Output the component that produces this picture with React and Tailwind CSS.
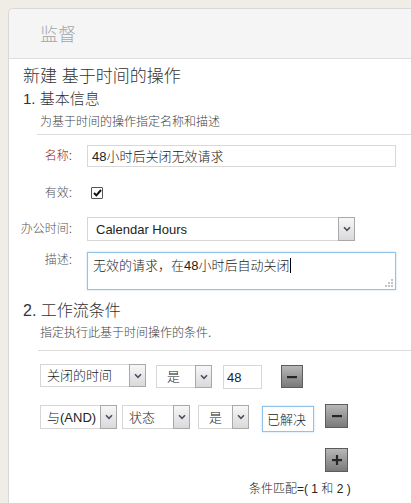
import React from 'react';

const font = "font-['Liberation_Sans','Noto_Sans_CJK_SC',sans-serif]";

function Chevron() {
  return (
    <svg width="8" height="6" viewBox="0 0 8 6">
      <path d="M1 1.2 L4 4.4 L7 1.2" fill="none" stroke="#4a5060" strokeWidth="1.6" />
    </svg>
  );
}

function Select({ children, className }) {
  return (
    <div className={`flex items-stretch bg-white border border-[#d6d6d6] ${className}`}>
      <div className="flex-1 flex items-center pl-[6px] text-[13px] text-[#222] leading-none whitespace-nowrap overflow-hidden">
        {children}
      </div>
      <div className="w-[17px] -my-px -mr-px flex items-center justify-center border border-[#a9a9a9] bg-linear-to-b from-[#f7f7f7] to-[#d9d9d9]">
        <Chevron />
      </div>
    </div>
  );
}

function SquareButton({ plus, className }) {
  return (
    <div
      className={`flex items-center justify-center border border-[#5c5c5c] bg-linear-to-b from-[#b8b8b8] to-[#7a7a7a] ${className}`}
    >
      <svg width="12" height="12" viewBox="0 0 12 12">
        <rect x="1" y="5" width="10" height="2.2" fill="#262626" />
        {plus && <rect x="4.9" y="1" width="2.2" height="10" fill="#262626" />}
      </svg>
    </div>
  );
}

function FormRow({ label, red, className, children }) {
  return (
    <div className={`flex ${className}`}>
      <div className={`w-[63px] text-right text-[12px] leading-[16px] ${red ? 'text-[#8e1b1b]' : 'text-[#555]'}`}>
        {label}
      </div>
      <div className="ml-[15px]">{children}</div>
    </div>
  );
}

export default function App() {
  return (
    <div className={`w-[411px] h-[503px] overflow-hidden bg-[#f0ece6] pt-[8px] pl-[8px] font-light ${font}`}>
      <div className="h-full bg-white border-l border-t border-[#d8d8d8] rounded-tl-[5px]">
        <div className="h-[50px] bg-[#f5f5f5] border-b border-[#dedede] rounded-tl-[5px] flex items-center pl-[31px] pt-[3px]">
          <span className="text-[18px] leading-none text-[#a2a6ab]">监督</span>
        </div>

        <div className="mt-[8px] pl-[14px] text-[17px] leading-[20px] text-[#333]">新建 基于时间的操作</div>
        <div className="mt-[2px] pl-[14px] text-[15px] leading-[20px] text-[#333]">1. 基本信息</div>
        <div className="mt-[5px] pl-[31px] text-[12px] leading-[16px] text-[#444]">为基于时间的操作指定名称和描述</div>
        <div className="mt-[4px] ml-[28px] border-t border-[#dcdcdc]" />

        <FormRow label="名称:" red className="mt-[10px] h-[22px] items-center">
          <div className="w-[309px] h-[22px] border border-[#d8d8d8] flex items-center pl-[4px] text-[13px] text-[#222] leading-none">
            48小时后关闭无效请求
          </div>
        </FormRow>

        <FormRow label="有效:" className="mt-[16px] h-[20px] items-center">
          <div className="ml-[4px] w-[12px] h-[12px] border border-[#555] rounded-[1px] flex items-center justify-center bg-white">
            <svg width="9" height="8" viewBox="0 0 9 8">
              <path d="M1 4 L3.4 6.4 L8 1" fill="none" stroke="#111" strokeWidth="2" />
            </svg>
          </div>
        </FormRow>

        <FormRow label="办公时间:" className="mt-[14px] h-[24px] items-center">
          <Select className="w-[268px] h-[24px]">
            <span className="pl-[2px] text-[13px] text-[#222]">Calendar Hours</span>
          </Select>
        </FormRow>

        <FormRow label="描述:" className="mt-[11px] items-start">
          <div className="relative w-[309px] h-[38px] border border-[#8fc3ec] shadow-[0_0_2px_rgba(120,180,230,0.5)] pl-[5px] pt-[5px] text-[13px] leading-[16px] text-[#222] flex items-start">
            <span>无效的请求，在48小时后自动关闭</span>
            <span className="inline-block w-px h-[15px] bg-black ml-[1px]" />
            <svg className="absolute right-[2px] bottom-[2px]" width="8" height="8" viewBox="0 0 8 8">
              <rect x="6" y="0" width="2" height="2" fill="#c4c4c4" />
              <rect x="3" y="3" width="2" height="2" fill="#c4c4c4" />
              <rect x="6" y="3" width="2" height="2" fill="#c4c4c4" />
              <rect x="0" y="6" width="2" height="2" fill="#c4c4c4" />
              <rect x="3" y="6" width="2" height="2" fill="#c4c4c4" />
              <rect x="6" y="6" width="2" height="2" fill="#c4c4c4" />
            </svg>
          </div>
        </FormRow>

        <div className="mt-[11px] pl-[14px] text-[16px] leading-[20px] text-[#333]">2. 工作流条件</div>
        <div className="mt-[4px] pl-[31px] text-[12px] leading-[16px] text-[#444]">指定执行此基于时间操作的条件.</div>
        <div className="mt-[9px] ml-[29px] border-t border-[#dcdcdc]" />

        <div className="mt-[13px] pl-[31px] flex items-start h-[24px]">
          <Select className="w-[106px] h-[23px]">关闭的时间</Select>
          <Select className="ml-[10px] w-[56px] h-[23px] mt-px">
            <span className="pl-[4px]">是</span>
          </Select>
          <div className="ml-[11px] mt-px w-[39px] h-[24px] border border-[#d8d8d8] flex items-center pl-[3px] text-[13px] leading-none text-[#222]">
            48
          </div>
          <SquareButton className="ml-[19px] mt-px w-[22px] h-[23px]" />
        </div>

        <div className="mt-[16px] pl-[31px] flex items-start">
          <Select className="mt-px w-[77px] h-[24px]">与(AND)</Select>
          <Select className="ml-[5px] mt-px w-[68px] h-[24px]">状态</Select>
          <Select className="ml-[8px] mt-px w-[51px] h-[24px]">
            <span className="pl-[4px]">是</span>
          </Select>
          <div className="ml-[13px] mt-[2px] w-[52px] h-[26px] border border-[#8fc3ec] shadow-[0_0_2px_rgba(120,180,230,0.5)] flex items-center pl-[4px] text-[13px] leading-none text-[#222]">
            已解决
          </div>
          <SquareButton className="ml-[11px] w-[23px] h-[24px]" />
        </div>

        <div className="mt-[16px] pl-[316px]">
          <SquareButton plus className="w-[23px] h-[24px]" />
        </div>

        <div className="mt-[9px] pl-[240px] text-[12px] leading-[16px] text-[#222] whitespace-pre">条件匹配=( 1 和 2 )</div>
      </div>
    </div>
  );
}
